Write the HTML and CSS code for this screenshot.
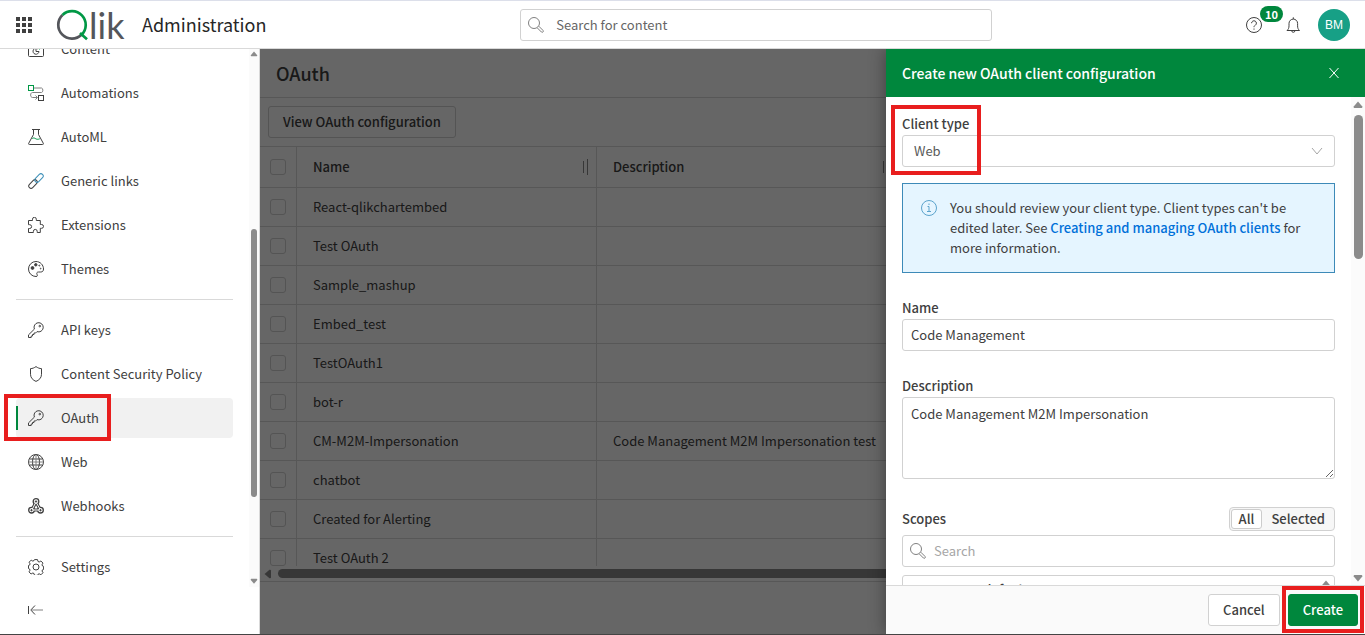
FILE: index.html
```html
<!DOCTYPE html>
<html lang="en">
<head>
  <meta charset="UTF-8" />
  <meta name="viewport" content="width=device-width, initial-scale=1.0"/>
  <title>OAuth - Administration</title>
  <link rel="stylesheet" href="styles.css">
</head>
<body>
  <!-- shared icons -->
  <svg class="sprite" aria-hidden="true">
    <symbol id="search" viewBox="0 0 16 16">
      <circle cx="6" cy="6" r="5.5"/>
      <path d="M9.2 10.8l4.2 4.2a1.1 1.1 0 0 0 1.6-1.6l-4.2-4.2"/>
    </symbol>
    <symbol id="key" viewBox="0 0 16 16">
      <path d="M6.4 7.1A4.6 4.6 0 1 1 9 9.6L7.6 11H6v1.5H4.5V14H3.2v1.5H.5v-2.6z"/>
      <circle cx="11.8" cy="4.1" r=".8"/>
    </symbol>
    <symbol id="up" viewBox="0 0 10 8"><path d="M5 0.5L9.3 5.5Q9.6 7 8.6 7H1.4Q.4 7 .7 5.5z"/></symbol>
  </svg>

  <header class="topbar">
    <div class="brand">
      <button class="icon-btn" aria-label="Launcher">
        <svg class="dots" width="16" height="16" viewBox="0 0 16 16"><path d="M0 0h4v4H0zM6 0h4v4H6zM12 0h4v4h-4zM0 6h4v4H0zM6 6h4v4H6zM12 6h4v4h-4zM0 12h4v4H0zM6 12h4v4H6zM12 12h4v4h-4z"/></svg>
      </button>
      <svg class="logo" width="68" height="32" viewBox="0 0 68 32" role="img" aria-label="Qlik">
        <path class="ring-gray" d="M5.5 6A13.700 13.700 0 0 0 24.500 25.800"/>
        <path class="ring-green" d="M5.500 6A13.700 13.700 0 0 1 24.500 25.800M23 24L30 30.300"/>
        <text x="32" y="30">lik</text>
      </svg>
      <span class="app-name">Administration</span>
    </div>

    <label class="top-search">
      <svg class="ico" width="16" height="16"><use href="#search"/></svg>
      <input type="text" placeholder="Search for content" aria-label="Search for content">
    </label>

    <div class="top-actions">
      <button class="icon-btn help" aria-label="Help">
        <svg class="ico" width="16" height="16" viewBox="0 0 16 16"><circle cx="8" cy="8" r="7.5"/><path d="M5.6 6.2a2.4 2.4 0 1 1 3.7 2C8.3 8.9 8 9.200 8 10.200M8 11.500v1.200"/></svg>
        <span class="badge">10</span>
      </button>
      <button class="icon-btn" aria-label="Notifications">
        <svg class="ico" width="16" height="16" viewBox="0 0 16 16"><path d="M2 13.500h12.500c-1.400-1.300-1.900-2.500-1.900-4.700V6.400a4.300 4.300 0 0 0-8.600 0v2.400c0 2.200-.6 3.400-2 4.700zM8.300 2V.3M6.700 13.700a1.600 1.600 0 0 0 3.200 0"/></svg>
      </button>
      <button class="avatar">BM</button>
    </div>
  </header>

  <div class="layout">
    <aside class="sidebar">
      <div class="side-scroll">
        <nav class="side-nav">
          <a href="#" class="nav-item">
            <svg class="ico" width="16" height="16" viewBox="0 0 16 16"><rect x=".5" y="1.500" width="15" height="14" rx="1"/><path d="M.5 4.500h15M10 8a3 3 0 1 0 1 2.500H8V7.500"/><path class="green" d="M9.500 6.500a3 3 0 0 1 2 2"/></svg>
            Content
          </a>
          <a href="#" class="nav-item">
            <svg class="ico" width="16" height="16" viewBox="0 0 16 16"><path class="soft" d="M6 3h7.500c1.800 0 1.800 4.500 0 4.500H4.500c-2.500 0-2.500 5 0 5H9M7.500 10.500l2 2-2 2"/><rect class="green" x=".5" y=".5" width="5" height="5"/><rect x="10.500" y="10.500" width="5" height="5"/></svg>
            Automations
          </a>
          <a href="#" class="nav-item">
            <svg class="ico" width="16" height="16" viewBox="0 0 16 16"><path d="M4 .5h8M5.500.5v5L.7 14.300q-.4 1.200.8 1.200h13q1.200 0 .8-1.200L10.500 5.500v-5"/><path class="green" d="M4.300 9.500c1.500-1 2.200-.4 3.500.3s2.400.6 4 0"/></svg>
            AutoML
          </a>
          <a href="#" class="nav-item">
            <svg class="ico" width="16" height="16" viewBox="0 0 16 16"><rect x="0" y="8.700" width="10" height="4.600" rx="2.300" transform="rotate(-45 5 11)"/><rect class="blue" x="6" y="2.700" width="10" height="4.600" rx="2.300" transform="rotate(-45 11 5)"/></svg>
            Generic links
          </a>
          <a href="#" class="nav-item">
            <svg class="ico" width="16" height="16" viewBox="0 0 16 16"><path d="M.5 3.500h4V2.200a1.900 1.900 0 0 1 3.800 0v1.300h4v4h1.300a1.900 1.900 0 0 1 0 3.800h-1.300v4.200H9.200v-1.200a1.900 1.900 0 0 0-3.800 0v1.200H.5v-4h1.200a1.900 1.900 0 0 0 0-3.800H.5z"/></svg>
            Extensions
          </a>
          <a href="#" class="nav-item">
            <svg class="ico" width="16" height="16" viewBox="0 0 16 16"><path d="M8 .5a7.500 7.500 0 0 0 0 15c1.800 0 1.500-1.300 1-2.200-.6-1.300 0-2.300 1.500-2.300h2.200c1.800 0 2.800-1 2.800-3C15.500 4 12.200.5 8 .5z"/><circle class="solid" cx="4.500" cy="7" r="1.400"/><circle class="solid" cx="7.800" cy="3.800" r="1.200"/><circle cx="11.300" cy="4.600" r=".5"/><circle cx="12.700" cy="7.600" r=".4"/></svg>
            Themes
          </a>
          <hr>
          <a href="#" class="nav-item">
            <svg class="ico" width="16" height="16"><use href="#key"/></svg>
            API keys
          </a>
          <a href="#" class="nav-item">
            <svg class="ico" width="16" height="16" viewBox="0 0 16 16"><path d="M8 .6c1.800 1.300 3.600 2 5.500 2v5.700c0 3.600-2.500 5.900-5.500 7.100-3-1.200-5.500-3.500-5.500-7.100V2.600c1.900 0 3.700-.7 5.500-2z"/></svg>
            Content Security Policy
          </a>
          <a href="#" class="nav-item active">
            <svg class="ico" width="16" height="16"><use href="#key"/></svg>
            OAuth
            <span class="mark mark-nav"></span>
          </a>
          <a href="#" class="nav-item">
            <svg class="ico" width="16" height="16" viewBox="0 0 16 16"><circle cx="8" cy="8" r="7.500"/><ellipse cx="8" cy="8" rx="3.500" ry="7.500"/><path d="M1.500 5h13M1.500 11h13"/><path class="soft" d="M.5 8h15M8 .5v15"/></svg>
            Web
          </a>
          <a href="#" class="nav-item">
            <svg class="ico" width="16" height="16" viewBox="0 0 16 16"><path class="hook-out" d="M8 4L4 11.800M8 4l4.300 7.800M4 12h8"/><g class="hook-ring"><circle cx="8" cy="3.500" r="2.800"/><circle cx="3.500" cy="12.200" r="2.800"/><circle cx="12.500" cy="12.200" r="2.800"/></g><path class="hook-in" d="M8 4L4 11.800M8 4l4.300 7.800M4 12h8"/><circle class="solid" cx="8" cy="3.500" r=".7"/><circle class="solid" cx="3.500" cy="12.200" r=".7"/><circle class="solid" cx="12.500" cy="12.200" r=".7"/></svg>
            Webhooks
          </a>
          <hr>
          <a href="#" class="nav-item">
            <svg class="ico" width="16" height="16" viewBox="0 0 16 16"><path d="M6.500.6h3l.5 1.900 1.200.5 1.700-1 2.100 2.100-1 1.700.5 1.200 1.100.4v3l-1.100.4-.5 1.200 1 1.700-2.100 2.100-1.700-1-1.200.5-.5 1.100h-3L6 14.500l-1.200-.5-1.700 1L1 12.900l1-1.700-.4-1.200L.5 9.500v-3l1.100-.4.5-1.200-1-1.700L3.200 1.100l1.600 1L6 1.600z"/><circle cx="8" cy="8" r="3"/></svg>
            Settings
          </a>
        </nav>
        <div class="scrollbar">
          <svg class="arrow" width="8" height="6"><use href="#up"/></svg>
          <div class="thumb side-thumb"></div>
          <svg class="arrow down" width="8" height="6"><use href="#up"/></svg>
        </div>
      </div>
      <button class="icon-btn collapse" aria-label="Collapse menu">
        <svg class="ico" width="16" height="16" viewBox="0 0 16 16"><path d="M.5 4v8"/><path d="M7 3.500L2.800 8 7 12.500"/><path class="soft" d="M3 8h12"/></svg>
      </button>
    </aside>

    <main class="content">
      <h1>OAuth</h1>
      <div class="toolbar"><button class="btn">View OAuth configuration</button></div>
      <div class="table-wrap">
        <table>
          <thead>
            <tr>
              <th class="check"><input type="checkbox" aria-label="Select all"></th>
              <th class="col">Name<span class="resizer"></span></th>
              <th class="col">Description<span class="resizer"></span></th>
              <th></th>
            </tr>
          </thead>
          <tbody>
            <tr><td class="check"><input type="checkbox" aria-label="Select row"></td><td>React-qlikchartembed</td><td></td><td></td></tr>
            <tr><td class="check"><input type="checkbox" aria-label="Select row"></td><td>Test OAuth</td><td></td><td></td></tr>
            <tr><td class="check"><input type="checkbox" aria-label="Select row"></td><td>Sample_mashup</td><td></td><td></td></tr>
            <tr><td class="check"><input type="checkbox" aria-label="Select row"></td><td>Embed_test</td><td></td><td></td></tr>
            <tr><td class="check"><input type="checkbox" aria-label="Select row"></td><td>TestOAuth1</td><td></td><td></td></tr>
            <tr><td class="check"><input type="checkbox" aria-label="Select row"></td><td>bot-r</td><td></td><td></td></tr>
            <tr><td class="check"><input type="checkbox" aria-label="Select row"></td><td>CM-M2M-Impersonation</td><td>Code Management M2M Impersonation test</td><td></td></tr>
            <tr><td class="check"><input type="checkbox" aria-label="Select row"></td><td>chatbot</td><td></td><td></td></tr>
            <tr><td class="check"><input type="checkbox" aria-label="Select row"></td><td>Created for Alerting</td><td></td><td></td></tr>
            <tr><td class="check"><input type="checkbox" aria-label="Select row"></td><td>Test OAuth 2</td><td></td><td></td></tr>
          </tbody>
        </table>
      </div>
      <div class="h-scrollbar">
        <svg class="arrow left" width="10" height="8"><use href="#up"/></svg>
        <div class="h-thumb"></div>
      </div>
      <div class="table-footer"></div>
    </main>

    <div class="overlay"></div>

    <section class="drawer">
      <div class="drawer-head">
        <h2>Create new OAuth client configuration</h2>
        <button class="icon-btn close" aria-label="Close">
          <svg class="ico" width="16" height="16" viewBox="0 0 16 16"><path d="M3.500 3l9 10M12.500 3l-9 10"/></svg>
        </button>
      </div>

      <div class="drawer-body">
        <form class="form">
          <div class="field">
            <label for="client-type">Client type</label>
            <div class="select">
              <select id="client-type"><option>Web</option></select>
              <svg class="ico" width="12" height="12" viewBox="0 0 12 12"><path d="M1 3l5 6 5-6"/></svg>
            </div>
            <span class="mark mark-type"></span>
          </div>

          <div class="alert">
            <svg class="ico" width="16" height="16" viewBox="0 0 16 16"><circle cx="8" cy="8" r="7.500"/><path d="M8 3.500v1.500M6.500 6.500H8v5M6 11.500h4"/></svg>
            <p>You should review your client type. Client types can't be edited later. See <a href="#">Creating and managing OAuth clients</a> for more information.</p>
          </div>

          <div class="field">
            <label for="name">Name</label>
            <input type="text" id="name" value="Code Management">
          </div>

          <div class="field">
            <label for="description">Description</label>
            <textarea id="description">Code Management M2M Impersonation</textarea>
          </div>

          <div class="field">
            <div class="scopes-head">
              <label for="scope-search">Scopes</label>
              <div class="toggle">
                <button type="button" class="on">All</button>
                <button type="button">Selected</button>
              </div>
            </div>
            <div class="scope-search">
              <svg class="ico" width="16" height="16"><use href="#search"/></svg>
              <input type="text" id="scope-search" placeholder="Search">
            </div>
            <div class="scope-list">
              <span>user_default</span>
              <svg class="arrow" width="10" height="8"><use href="#up"/></svg>
            </div>
          </div>
        </form>
        <div class="scrollbar wide">
          <svg class="arrow" width="10" height="8"><use href="#up"/></svg>
          <div class="thumb drawer-thumb"></div>
          <svg class="arrow down" width="10" height="8"><use href="#up"/></svg>
        </div>
      </div>

      <div class="drawer-foot">
        <button class="btn">Cancel</button>
        <div class="create">
          <button class="btn primary">Create</button>
          <span class="mark mark-create"></span>
        </div>
      </div>
    </section>
  </div>
</body>
</html>
```
FILE: styles.css
```css
* {
  box-sizing: border-box;
}
body {
  margin: 0;
  height: 100vh;
  display: flex;
  flex-direction: column;
  overflow: hidden;
  border-top: 1px solid #dcdfea;
  border-bottom: 1px solid #444;
  background: #fff;
  color: #404040;
  font-family: "Noto Sans CJK SC", "Noto Sans", sans-serif;
  font-size: 13px;
  line-height: 20px;
}
button, input, select, textarea {
  font: inherit;
  color: inherit;
}
button {
  cursor: pointer;
}
.sprite {
  display: none;
}
.ico {
  flex: none;
  fill: none;
  stroke: #404040;
}
.ico .green {
  stroke: #009845;
}
.ico .blue {
  stroke: #3b8fb8;
}
.ico .soft {
  stroke: #808080;
}
.ico .solid {
  fill: #404040;
}
.hook-out {
  stroke-width: 3;
}
.hook-ring {
  fill: #fff;
  stroke-width: 1.3;
}
.hook-in {
  stroke: #fff;
}
.arrow {
  flex: none;
  fill: #8b8b8b;
}
.arrow.down {
  transform: rotate(180deg);
}
.arrow.left {
  transform: rotate(-90deg);
}
.icon-btn {
  display: flex;
  padding: 0;
  border: none;
  background: none;
}

/* top bar */
.topbar {
  flex: none;
  height: 48px;
  display: flex;
  align-items: center;
  justify-content: space-between;
  padding: 0 15px 0 16px;
  border-bottom: 1px solid #d9d9d9;
}
.brand {
  display: flex;
  align-items: center;
}
.dots {
  fill: #404040;
}
.logo {
  margin-left: 25px;
  overflow: visible;
  fill: none;
}
.ring-gray {
  stroke: #54565b;
  stroke-width: 2.7;
}
.ring-green {
  stroke: #009845;
  stroke-width: 2.7;
}
.logo text {
  font-family: Lato, sans-serif;
  font-size: 36px;
  fill: #54565b;
}
.app-name {
  margin-left: 17px;
  font-size: 18px;
  line-height: 22px;
  padding-bottom: 2px;
  color: #262626;
}
.top-search {
  width: 472px;
  height: 32px;
  display: flex;
  align-items: center;
  gap: 12px;
  padding: 0 7px;
  border: 1px solid #d1d1d1;
  border-radius: 3px;
}
.top-search input, .scope-search input {
  flex: 1;
  min-width: 0;
  padding: 0;
  border: none;
  outline: none;
  background: none;
}
.top-search .ico, .scope-search .ico {
  stroke: #808080;
}
.top-search input::placeholder {
  color: #666;
}
.top-actions {
  display: flex;
  align-items: center;
}
.help {
  position: relative;
  margin-right: 23px;
}
.badge {
  position: absolute;
  left: 14px;
  top: -11px;
  padding: 0 5px;
  border-radius: 8px;
  background: #00873d;
  color: #fff;
  font-size: 11px;
  font-weight: bold;
  line-height: 16px;
}
.avatar {
  width: 32px;
  height: 32px;
  margin-left: 17px;
  padding: 0;
  border: none;
  border-radius: 50%;
  background: #17a086;
  color: #fff;
  font-family: "Liberation Sans", Arial, sans-serif;
  font-size: 12px;
}

/* side menu */
.layout {
  position: relative;
  flex: 1;
  min-height: 0;
  display: flex;
}
.sidebar {
  flex: none;
  width: 260px;
  display: flex;
  flex-direction: column;
  border-right: 1px solid #d9d9d9;
}
.side-scroll {
  flex: 1;
  min-height: 0;
  display: flex;
}
.side-nav {
  flex: 1;
  display: flex;
  flex-direction: column;
  justify-content: flex-end;
  gap: 4px;
  padding: 0 16px;
  overflow: hidden;
}
.nav-item {
  position: relative;
  flex: none;
  height: 40px;
  display: flex;
  align-items: center;
  gap: 17px;
  padding-left: 12px;
  border-radius: 4px;
  color: #404040;
  text-decoration: none;
}
.nav-item.active {
  background: #f1f1f1;
}
.nav-item.active::before {
  content: "";
  position: absolute;
  left: 0;
  top: 8px;
  width: 2px;
  height: 24px;
  background: #00873d;
}
.side-nav hr {
  flex: none;
  width: 100%;
  margin: 6px 0;
  border: none;
  border-top: 1px solid #d9d9d9;
}
.scrollbar {
  flex: none;
  width: 10px;
  display: flex;
  flex-direction: column;
  align-items: center;
  padding: 2px 0 3px;
  background: #fbfbfb;
}
.thumb {
  width: 6px;
  border-radius: 5px;
  background: #8b8b8b;
}
.side-thumb {
  height: 268px;
  margin: auto 0 81px;
}
.collapse {
  height: 47px;
  padding: 15px 28px;
}

/* oauth table */
.content {
  flex: 1;
  min-width: 0;
  display: flex;
  flex-direction: column;
}
h1 {
  margin: 0;
  padding: 12px 16px;
  border-bottom: 1px solid #d9d9d9;
  font-size: 18px;
  font-weight: 500;
  line-height: 24px;
}
.toolbar {
  padding: 8px;
  border-bottom: 1px solid #d9d9d9;
}
.btn {
  height: 32px;
  padding: 0 14px;
  border: 1px solid #d1d1d1;
  border-radius: 3px;
  background: #fff;
  font-weight: 500;
}
.btn.primary {
  border-color: #00873d;
  background: #00873d;
  color: #fff;
}
.table-wrap {
  flex: 1;
  min-height: 0;
  overflow: hidden;
}
table {
  width: 1500px;
  table-layout: fixed;
  border-collapse: separate;
  border-spacing: 0;
}
th, td {
  height: 39px;
  padding: 0 16px;
  border-right: 1px solid #d9d9d9;
  border-bottom: 1px solid #d9d9d9;
  text-align: left;
}
th {
  height: 41px;
  font-weight: 500;
}
.col {
  position: relative;
  width: 300px;
}
.check {
  width: 37px;
  padding: 0 10px;
}
.check input {
  appearance: none;
  display: block;
  width: 16px;
  height: 16px;
  margin: 0;
  border: 1px solid #d1d1d1;
  border-radius: 3px;
}
.resizer {
  position: absolute;
  right: 8px;
  top: 12px;
  width: 5px;
  height: 16px;
  padding: 2px 0;
  border-right: 1px solid #8b8b8b;
}
.resizer::before {
  content: "";
  display: block;
  height: 12px;
  border-left: 1px solid #8b8b8b;
}
.h-scrollbar {
  flex: none;
  height: 16px;
  display: flex;
  align-items: center;
  gap: 5px;
  padding-left: 3px;
  border-bottom: 1px solid #d9d9d9;
}
.h-thumb {
  width: 900px;
  height: 9px;
  border-radius: 5px;
  background: #8b8b8b;
}
.table-footer {
  flex: none;
  height: 52px;
}
.overlay {
  position: absolute;
  inset: 0 0 0 260px;
  background: rgba(0, 0, 0, 0.6);
}

/* drawer */
.drawer {
  position: absolute;
  top: 0;
  right: 0;
  bottom: 0;
  width: 479px;
  display: flex;
  flex-direction: column;
  background: #fff;
  box-shadow: 0 0 16px rgba(0, 0, 0, 0.4);
  clip-path: inset(0 0 0 -20px);
}
.drawer-head {
  flex: none;
  height: 48px;
  display: flex;
  align-items: center;
  justify-content: space-between;
  padding: 0 23px 0 16px;
  background: #00873d;
  color: #fff;
}
h2 {
  margin: 0;
  font-size: 14px;
  font-weight: 500;
}
.close .ico {
  stroke: #fff;
}
.drawer-body {
  flex: 1;
  min-height: 0;
  display: flex;
  overflow: hidden;
}
.form {
  flex: 1;
  min-width: 0;
  display: flex;
  flex-direction: column;
  gap: 24px;
  padding: 16px;
}
.field {
  position: relative;
  flex: none;
  display: flex;
  flex-direction: column;
}
.field label {
  font-weight: 500;
  line-height: 22px;
}
.field > input, .field textarea, .select select {
  width: 100%;
  height: 32px;
  padding: 0 8px;
  border: 1px solid #d1d1d1;
  border-radius: 3px;
  background: #fff;
}
.field > input {
  padding-bottom: 2px;
}
.field textarea {
  height: 82px;
  padding: 6px 8px;
  resize: vertical;
}
.select {
  position: relative;
}
.select select {
  appearance: none;
  padding: 0 11px;
  color: #595959;
}
.select .ico {
  position: absolute;
  right: 12px;
  top: 10px;
  stroke: #a6a6a6;
}
.alert {
  flex: none;
  display: flex;
  gap: 13px;
  margin-top: -8px;
  padding: 14px 18px;
  border: 1px solid #3d8ab8;
  background: #e5f5ff;
}
.alert .ico {
  margin-top: 2px;
  stroke: #5ba3cc;
}
.alert p {
  margin: 0;
}
.alert a {
  color: #0070d9;
  font-weight: 500;
  text-decoration: none;
}
.scopes-head {
  height: 32px;
  display: flex;
  align-items: center;
  justify-content: space-between;
}
.toggle {
  display: flex;
  gap: 1px;
  padding: 1px;
  border: 1px solid #d1d1d1;
  border-radius: 4px;
  background: #f7f7f7;
}
.toggle button {
  height: 20px;
  padding: 0 7px;
  border: 1px solid transparent;
  border-radius: 3px;
  background: none;
  font-weight: 500;
  line-height: 18px;
}
.toggle .on {
  border-color: #ccc;
  background: #fff;
}
.scope-search {
  height: 32px;
  display: flex;
  align-items: center;
  gap: 8px;
  padding: 0 7px;
  border: 1px solid #d1d1d1;
  border-radius: 3px;
}
.scope-search input::placeholder {
  color: #a6a6a6;
}
.scope-list {
  height: 160px;
  display: flex;
  align-items: flex-start;
  justify-content: space-between;
  margin-top: 8px;
  padding: 4px 3px 0 46px;
  border: 1px solid #d1d1d1;
  border-radius: 3px;
  font-weight: 500;
}
.scrollbar.wide {
  width: 14px;
  padding: 4px 0 3px;
}
.wide .thumb {
  width: 9px;
}
.drawer-thumb {
  height: 144px;
  margin: 6px 0 auto;
}
.drawer-foot {
  flex: none;
  height: 49px;
  display: flex;
  align-items: center;
  justify-content: flex-end;
  gap: 8px;
  padding: 0 7px;
  border-top: 1px solid #d9d9d9;
  background: #fafafa;
}
.create {
  position: relative;
}

/* red callouts */
.mark {
  position: absolute;
  border: 4px solid #e81e1e;
  pointer-events: none;
}
.mark-nav {
  left: -12px;
  top: -4px;
  width: 107px;
  height: 47px;
}
.mark-type {
  left: -11px;
  top: -8px;
  width: 90px;
  height: 70px;
}
.mark-create {
  inset: -8px -6px -7px;
}
```
